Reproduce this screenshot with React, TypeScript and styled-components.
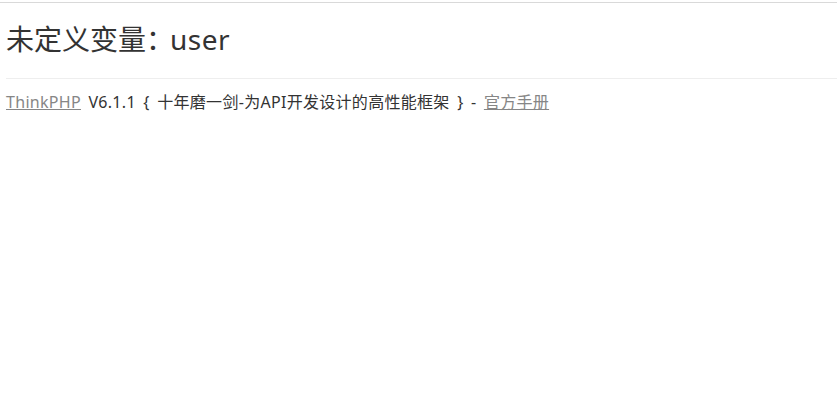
import { createGlobalStyle } from 'styled-components'
import styled from 'styled-components'

const GlobalStyle = createGlobalStyle`
  html, body {
    margin: 0;
    padding: 0;
    background: #fff;
  }
  body {
    color: #333;
    font-family: "Noto Sans", "Noto Sans CJK SC", sans-serif;
  }
`

const Page = styled.div`
  margin-top: 2px;
  border-top: 1px solid #d9d9d9;
`

const Exception = styled.div`
  padding: 0 0 0 6px;
`

const Title = styled.h1`
  margin: 20px 0 0;
  font-size: 28px;
  font-weight: 400;
  line-height: 32px;
  font-family: "Noto Sans", "Noto Sans CJK SC", sans-serif;
`

const Colon = styled.span`
  letter-spacing: -8px;
  margin-right: 4px;
`

const User = styled.span`
  letter-spacing: 0.5px;
`

const Copyright = styled.div`
  margin-top: 23px;
  padding: 13px 0 12px;
  border-top: 1px solid #eee;
  font-size: 16px;
  line-height: 20px;
  white-space: pre;
  word-spacing: 3px;
  letter-spacing: 0.3px;
`

const Link = styled.a`
  color: #868686;
  text-decoration: underline;
`

function App() {
  return (
    <>
      <GlobalStyle />
      <Page>
        <Exception>
          <Title>未定义变量<Colon>：</Colon><User>user</User></Title>
          <Copyright>
            <Link href="#thinkphp">ThinkPHP</Link> V6.1.1 {'{'} 十年磨一剑-为API开发设计的高性能框架 {'}'} - <Link href="#manual">官方手册</Link>
          </Copyright>
        </Exception>
      </Page>
    </>
  )
}

export default App
